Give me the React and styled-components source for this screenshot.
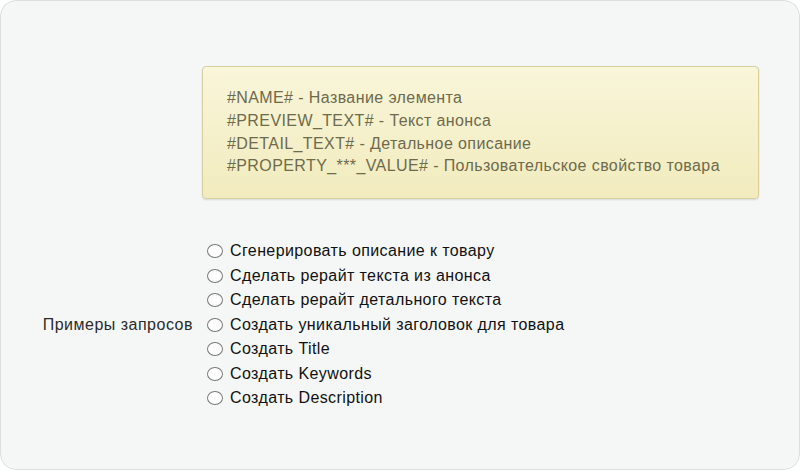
import React from "react";
import styled, { createGlobalStyle } from "styled-components";

const Global = createGlobalStyle`
  html, body { margin: 0; padding: 0; background: #ffffff; }
  body { font-family: "Liberation Sans", Arial, sans-serif; }
  * { box-sizing: border-box; }
`;

const Card = styled.div`
  width: 800px;
  height: 470px;
  background: #f5f7f7;
  border: 1px solid #dcdfdf;
  border-radius: 16px;
  padding-top: 65px;
  display: grid;
  grid-template-columns: 201px 557px;
  grid-auto-rows: auto;
  row-gap: 40px;
  align-content: start;
  letter-spacing: 0.4px;
`;

const Note = styled.div`
  grid-column: 2;
  height: 133px;
  padding: 20px 0 0 24px;
  border: 1px solid #d6cf9f;
  border-radius: 4px;
  background: linear-gradient(to bottom, #f9f6da 0%, #f1ebbd 100%);
  box-shadow: 0 1px 2px rgba(0, 0, 0, 0.12);
  color: #6e6a4c;
  font-size: 16px;
  line-height: 22.8px;
`;

const Line = styled.div`
  white-space: nowrap;
`;

const Label = styled.div`
  grid-column: 1;
  align-self: center;
  text-align: right;
  padding-right: 9px;
  color: #2b2b2b;
  font-size: 16px;
  letter-spacing: 0.5px;
`;

const Options = styled.div`
  grid-column: 2;
  display: flex;
  flex-direction: column;
`;

const Option = styled.label`
  display: flex;
  align-items: center;
  height: 24.5px;
  color: #111;
  font-size: 16px;
  white-space: nowrap;
`;

const Radio = styled.span`
  display: inline-block;
  width: 16px;
  height: 14px;
  margin: 0 7px 0 5px;
  border: 1px solid #7a7a7a;
  border-radius: 50%;
  background: #fff;
  flex: none;
`;

const notes = [
  "#NAME# - Название элемента",
  "#PREVIEW_TEXT# - Текст анонса",
  "#DETAIL_TEXT# - Детальное описание",
  "#PROPERTY_***_VALUE# - Пользовательское свойство товара",
];

const options = [
  "Сгенерировать описание к товару",
  "Сделать рерайт текста из анонса",
  "Сделать рерайт детального текста",
  "Создать уникальный заголовок для товара",
  "Создать Title",
  "Создать Keywords",
  "Создать Description",
];

export default function App() {
  return (
    <>
      <Global />
      <Card>
        <Note>
          {notes.map((n) => (
            <Line key={n}>{n}</Line>
          ))}
        </Note>
        <Label>Примеры запросов</Label>
        <Options>
          {options.map((o) => (
            <Option key={o}>
              <Radio />
              {o}
            </Option>
          ))}
        </Options>
      </Card>
    </>
  );
}
